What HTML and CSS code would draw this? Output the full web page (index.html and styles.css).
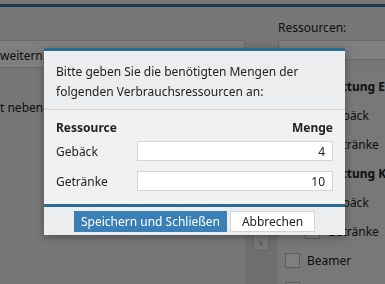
FILE: index.html
```html
<!DOCTYPE html>
<html lang="de">
<head>
  <meta charset="UTF-8">
  <title>Buchung</title>
  <link rel="stylesheet" href="styles.css">
</head>
<body>
  <div class="topline"></div>
  <div id="main">
    <div class="content">
      <div class="editbox">weitern. Die Buchung kann jederzeit angepasst werden.</div>
      <p class="note">t neben der Raumbuchung auch Verbrauchsressourcen.</p>
    </div>
    <div class="strip">
      <div class="toggle">&rsaquo;</div>
    </div>
    <div class="side">
      <label class="side-label">Ressourcen:</label>
      <div class="select">Alle</div>
      <ul class="reslist">
        <li class="group">Ausstattung Erdgeschoss</li>
        <li class="item sub"><span class="check"></span>Gebäck</li>
        <li class="item sub"><span class="check"></span>Getränke</li>
        <li class="group">Ausstattung Keller</li>
        <li class="item sub"><span class="check"></span>Gebäck</li>
        <li class="item sub"><span class="check"></span>Getränke</li>
        <li class="item"><span class="check"></span>Beamer</li>
        <li class="item"><span class="check"></span>Flipchart</li>
      </ul>
    </div>
  </div>

  <div class="overlay"></div>

  <div class="dialog">
    <div class="message">Bitte geben Sie die benötigten Mengen der folgenden Verbrauchsressourcen an:</div>
    <table class="amounts">
      <tr>
        <th class="name">Ressource</th>
        <th class="qty">Menge</th>
      </tr>
      <tr>
        <td class="name">Gebäck</td>
        <td><input type="text" value="4"></td>
      </tr>
      <tr>
        <td class="name">Getränke</td>
        <td><input type="text" value="10"></td>
      </tr>
    </table>
    <div class="footer">
      <button class="btn primary">Speichern und Schließen</button>
      <button class="btn">Abbrechen</button>
    </div>
  </div>
</body>
</html>
```

FILE: styles.css
```css
body {
  margin: 0;
  font-family: "Noto Sans", sans-serif;
  font-size: 12px;
  color: #222;
  background-color: #eee;
  overflow: hidden;
  height: 284px;
}

.topline {
  margin-top: 4px;
  height: 3px;
  background-color: #3d74a0;
}

#main {
  display: grid;
  grid-template-columns: 245px 33px 1fr;
  height: 277px;
}

.content {
  padding-top: 33px;
  white-space: nowrap;
  overflow: hidden;
}
.editbox {
  height: 26px;
  line-height: 30px;
  background-color: #fff;
  border: 1px solid #d4d4d4;
  border-left: none;
  overflow: hidden;
}
.note {
  margin: 0;
  padding-top: 30px;
  line-height: 20px;
}

.strip {
  margin-top: 66px;
  background-color: #dcdcdc;
  padding-top: 160px;
}
.toggle {
  width: 14px;
  height: 16px;
  margin-left: 8px;
  background-color: #eee;
  border: 1px solid #c8c8c8;
  color: #888;
  font-size: 11px;
  line-height: 15px;
  text-align: center;
}

.side {
  padding-top: 12px;
  white-space: nowrap;
  overflow: hidden;
}
.side-label {
  display: block;
  line-height: 18px;
}
.select {
  margin-top: 3px;
  height: 18px;
  line-height: 26px;
  padding-left: 12px;
  background-color: #fff;
  border: 1px solid #d4d4d4;
  border-right: none;
  overflow: hidden;
}
.reslist {
  list-style: none;
  margin: 12px 0 0 0;
  padding: 0;
  background-color: #f0f0f0;
}
.reslist li {
  display: flex;
  align-items: center;
  height: 29px;
}
.group {
  font-weight: bold;
  padding-left: 23px;
}
.item {
  gap: 7px;
  padding-left: 7px;
}
.item.sub {
  padding-left: 27px;
}
.check {
  width: 13px;
  height: 13px;
  background-color: #fff;
  border: 1px solid #bbb;
}

.overlay {
  position: fixed;
  inset: 0;
  background-color: rgba(0, 0, 0, 0.5);
}

.dialog {
  position: absolute;
  left: 44px;
  top: 48px;
  width: 301px;
  background-color: #f1f1f1;
  border-top: 3px solid #2d6a90;
  box-shadow: 0 2px 8px rgba(0, 0, 0, 0.35);
}

.message {
  padding: 11px 12px 7px 12px;
  line-height: 20px;
  background-color: #ebedef;
  border-bottom: 1px solid #d2d2d2;
}

.amounts {
  width: 100%;
  border-collapse: collapse;
  margin: 8px 0 8px 0;
}
.amounts th {
  font-weight: bold;
  height: 18px;
  padding: 0 12px;
  text-align: left;
}
.amounts th.qty {
  text-align: right;
}
.amounts td {
  height: 30px;
  padding: 0 12px 0 0;
}
.amounts .name {
  padding-left: 12px;
  width: 69px;
}
.amounts input {
  box-sizing: border-box;
  width: 196px;
  height: 20px;
  border: 1px solid #d4d4d4;
  background-color: #fff;
  text-align: right;
  font-family: inherit;
  font-size: 12px;
  color: #222;
  padding: 0 7px;
}

.footer {
  border-top: 3px solid #2d6a90;
  background-color: #ebedef;
  display: flex;
  justify-content: center;
  gap: 3px;
  padding: 4px 0 3px 0;
}
.btn {
  font-family: inherit;
  font-size: 12px;
  height: 21px;
  min-width: 85px;
  padding: 0 6px;
  background-color: #fff;
  border: 1px solid #d4d4d4;
  color: #222;
}
.btn.primary {
  background-color: #3a7fb5;
  border-color: #3a7fb5;
  color: #fff;
}
```
